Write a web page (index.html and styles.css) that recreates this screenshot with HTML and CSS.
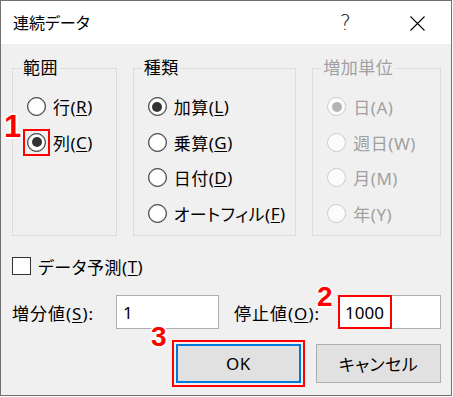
FILE: index.html
```html
<!DOCTYPE html>
<html lang="ja">
<head>
  <meta charset="UTF-8">
  <title>連続データ</title>
  <link rel="stylesheet" href="styles.css">
</head>
<body>
  <div class="window">
    <div class="titlebar">
      <span class="title">連続データ</span>
      <span class="help">?</span>
      <span class="close">
        <svg width="15" height="15" viewBox="0 0 15 15"><path d="M0.5 0.5L14.5 14.5M14.5 0.5L0.5 14.5" stroke="#000" stroke-width="1.1" fill="none"/></svg>
      </span>
    </div>

    <div class="content">
      <div class="groups">
        <!-- 範囲 -->
        <fieldset class="group g-range">
          <legend>範囲</legend>
          <label class="opt"><span class="radio"></span>行(<u>R</u>)</label>
          <label class="opt"><span class="hl"><span class="radio on"></span></span>列(<u>C</u>)</label>
        </fieldset>

        <!-- 種類 -->
        <fieldset class="group g-type">
          <legend>種類</legend>
          <label class="opt"><span class="radio on"></span>加算(<u>L</u>)</label>
          <label class="opt"><span class="radio"></span>乗算(<u>G</u>)</label>
          <label class="opt"><span class="radio"></span>日付(<u>D</u>)</label>
          <label class="opt"><span class="radio"></span>オートフィル(<u>F</u>)</label>
        </fieldset>

        <!-- 増加単位 (disabled) -->
        <fieldset class="group g-unit disabled">
          <legend>増加単位</legend>
          <label class="opt"><span class="radio on"></span>日(A)</label>
          <label class="opt"><span class="radio"></span>週日(W)</label>
          <label class="opt"><span class="radio"></span>月(M)</label>
          <label class="opt"><span class="radio"></span>年(Y)</label>
        </fieldset>
      </div>

      <label class="check"><span class="box"></span>データ予測(<u>T</u>)</label>

      <div class="values">
        <span class="lbl">増分値(<u>S</u>):</span>
        <div class="field">1</div>
        <span class="lbl lbl-stop">停止値(<u>O</u>):</span>
        <div class="field"><span class="hl-text">1000</span></div>
      </div>

      <div class="buttons">
        <button class="btn primary">OK</button>
        <button class="btn">キャンセル</button>
      </div>
    </div>

    <!-- step numbers -->
    <span class="badge b1">1</span>
    <span class="badge b2">2</span>
    <span class="badge b3">3</span>
  </div>
</body>
</html>
```

FILE: styles.css
```css
/* Excel "連続データ" dialog */
body {
  margin: 0;
  background-color: #fff;
  font-family: "Noto Sans", "Noto Sans CJK JP", sans-serif;
  font-feature-settings: "palt";
  color: #000;
}

.window {
  position: relative;
  width: 452px;
  height: 396px;
  box-sizing: border-box;
  border: 1px solid #707070;
  background-color: #f0f0f0;
  display: flex;
  flex-direction: column;
}

/* Title bar */
.titlebar {
  height: 43px;
  background-color: #fff;
  display: flex;
  align-items: center;
  padding: 0 26px 0 12px;
}

.title {
  flex: 1;
  font-size: 16px;
  padding-bottom: 2px;
}

.help {
  font-family: "DejaVu Sans", sans-serif;
  font-weight: 300;
  font-size: 21px;
  color: #222;
  margin-right: 59px;
}

.close {
  display: flex;
  margin-top: 1px;
}

/* Content */
.content {
  flex: 1;
  padding: 14px 10px 0 11px;
  font-size: 17px;
  letter-spacing: 0.5px;
}

.groups {
  display: flex;
  gap: 16px;
}

.group {
  margin: 0;
  box-sizing: border-box;
  height: 178px;
  padding: 11px 0 0 8px;
  border: 1px solid #dcdcdc;
  min-width: 0;
}

.g-range { width: 105px; }
.g-type  { width: 164px; }
.g-unit  { width: 129px; }

.group legend {
  padding: 0 2px;
  line-height: 20px;
}

.opt {
  display: flex;
  align-items: center;
  height: 35.5px;
  padding-left: 6px;
  white-space: nowrap;
}

u {
  text-underline-offset: 2px;
  text-decoration-thickness: 1px;
}

.radio {
  width: 19px;
  height: 19px;
  box-sizing: border-box;
  border: 1px solid #333;
  box-shadow: inset 0 0 0 0.6px rgba(0,0,0,0.35);
  border-radius: 50%;
  background-color: #fff;
  margin-right: 7px;
  display: flex;
  align-items: center;
  justify-content: center;
  flex: none;
}

.radio.on::after {
  content: "";
  width: 10px;
  height: 10px;
  border-radius: 50%;
  background-color: #333;
}

/* red marker round the radio */
.hl {
  display: flex;
  border: 2px solid #f00;
  padding: 2px;
  margin: -4px 3px -4px -4px;
}

.hl .radio {
  margin-right: 0;
}

.disabled legend,
.disabled .opt {
  color: #a0a0a0;
}

.disabled .radio {
  border-color: #cccccc;
  box-shadow: none;
  background-color: #fcfcfc;
}

.disabled .radio.on::after {
  background-color: #b4b4b4;
}

/* checkbox */
.check {
  display: flex;
  align-items: center;
  height: 24px;
  margin-top: 18px;
}

.check .box {
  width: 19px;
  height: 18px;
  box-sizing: border-box;
  border: 1px solid #333;
  background-color: #fff;
  margin-right: 7px;
}

/* value inputs */
.values {
  display: grid;
  grid-template-columns: 104px 103px 1fr 103px;
  align-items: center;
  margin-top: 17px;
}

.lbl {
  white-space: nowrap;
  letter-spacing: 1px;
}

.lbl-stop {
  padding-left: 15px;
}

.field {
  height: 34px;
  box-sizing: border-box;
  border: 1px solid #adadad;
  background-color: #fff;
  display: flex;
  align-items: center;
  padding-left: 6px;
  letter-spacing: 0;
}

.hl-text {
  align-self: stretch;
  display: flex;
  align-items: center;
  margin: -1px 0 -1px -7px;
  padding: 0 6px 0 5px;
  border: 2px solid #f00;
}

/* buttons */
.buttons {
  display: flex;
  justify-content: flex-end;
  gap: 15px;
  margin-top: 15px;
}

.btn {
  width: 125px;
  height: 39px;
  border: 1px solid #adadad;
  background-color: #e1e1e1;
  font-family: inherit;
  font-feature-settings: "palt";
  font-size: 17px;
  letter-spacing: 0.5px;
  color: #000;
  padding: 0;
}

.btn.primary {
  border: 2px solid #0078d7;
  outline: 2px solid #f00;
  outline-offset: 2px;
}

/* step numbers */
.badge {
  position: absolute;
  font-family: "Liberation Sans", Arial, sans-serif;
  font-weight: bold;
  font-size: 28px;
  line-height: 28px;
  color: #f00;
  text-shadow: 2px 0 #fff, -2px 0 #fff, 0 2px #fff, 0 -2px #fff,
    1px 1px #fff, -1px -1px #fff, 1px -1px #fff, -1px 1px #fff;
}

.b1 { left: 3px; top: 110px; font-size: 31px; line-height: 31px; }
.b2 { left: 316px; top: 282px; }
.b3 { left: 150px; top: 322px; }
```
